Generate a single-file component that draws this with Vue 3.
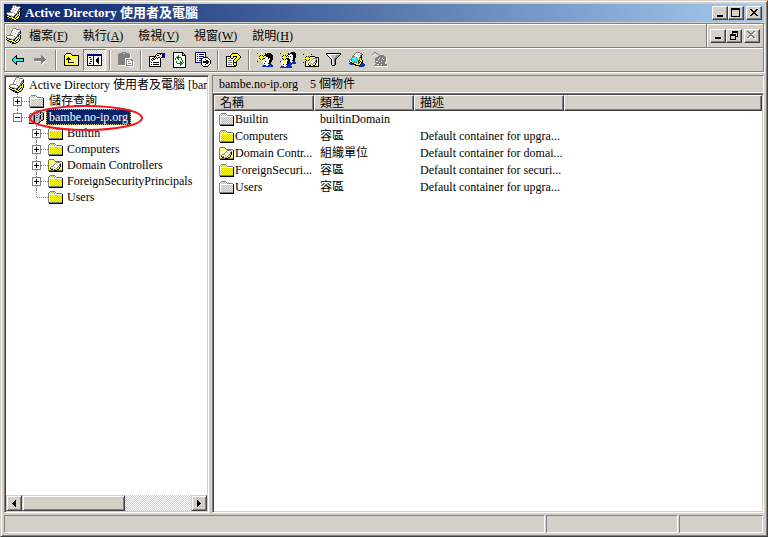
<script setup>
import { h, ref } from 'vue'

const palette = {
  K: '#000000', G: '#808080', g: '#c0c0c0', W: '#ffffff', Y: '#ffff00', y: '#ffff99',
  N: '#000080', B: '#0033cc', C: '#00ffff', R: '#008000', O: '#808000', F: '#ffe8c8'
}

const maps = {
  app: [
    '.......GGG......',
    '......GWWWGGGG..',
    '......GWgWWWWWG.',
    '.....GWWWWgWWGK.',
    '.....GWgWWWWGGK.',
    '....GWWWWgWWGgK.',
    '....GWWgWWWGGK..',
    '.GGGGGGWWWWGKYK.',
    'GWWWWWWgGWGGKYK.',
    'KgWWWWWWWGKYgYK.',
    '.KGGggWWGKgYKYK.',
    'KYYKKGGGKgYKYK..',
    '.KKYYYYKKYKYYK..',
    '..GKKKYYYKYYK...',
    '....KGKKYYKK....',
    '......KKKK......'
  ],
  folder: [
    '..GGGGG.........',
    '.GWdddWG........',
    'GWdddddWGGGGGG..',
    'GWWWWWWWWWWWWWK.',
    'GWddddddddddddK.',
    'GWddddddddddddK.',
    'GWddddddddddddK.',
    'GWddddddddddddK.',
    'GWddddddddddddK.',
    'GWddddddddddddK.',
    'GWddddddddddddK.',
    'GGGGGGGGGGGGGGK.',
    '.KKKKKKKKKKKKKK.'
  ],
  ou: [
    '.OOOOO..........',
    'OyyyyyO.........',
    'OyyyyyyOOOOOOO..',
    'OyyyyyyyGGGGyyK.',
    'OyyyyyyGWWWWGyK.',
    'OyyyyyGWgWWGKyK.',
    'OyyyyGWWWgWGKyK.',
    'OyyGGgWWWWGYKyK.',
    'OyGWWWGWWGYKyyK.',
    'OyKgGWWWGYYKyyK.',
    'OyyKKYGGYKKyyyK.',
    'OOOOOOKKKOOOOOK.',
    '.KKKKKKKKKKKKKK.'
  ],
  domain: [
    '......GGGGGG....',
    '.....GWWWWGK....',
    '....GWWWWGgKGGG.',
    '.GGGGGGGGggKWGK.',
    'GWWWgGgggGggGgK.',
    'GGGGGKgGGggKggK.',
    'GgggGKggggGKgGK.',
    'GgGgGKgKGgGKggK.',
    'GgggGKggggGKggK.',
    'GgggGKggggGGgGK.',
    'GgggGKggggGgKK..',
    'GgggGKggggGK....',
    'GgggGKgggGK.....',
    'KKKKKKKKKK......'
  ],
  back: [
    '....K.......',
    '...KK.......',
    '..KCK.......',
    '.KCCKKKKKKKK',
    'KCCCCCCCCCCK',
    'KCCCCCCCCCCK',
    '.KCCKKKKKKKK',
    '..KCK.......',
    '...KK.......',
    '....K.......'
  ],
  forward: [
    '.......G.....',
    '.......GG....',
    '.......GGG...',
    'GGGGGGGGGGG..',
    'GGGGGGGGGGGG.',
    'GGGGGGGGGGGWW',
    '.WWWWWWGGGWW.',
    '.......GGWW..',
    '.......GWW...',
    '........W....'
  ],
  up: [
    '..KKKKK........',
    '.KyyyyyK.......',
    'KyyyyyyyKKKKKKK',
    'KyYyYyYyYyYyYyK',
    'KYyYKYyYyYyYyYK',
    'KyYKKKyYyYyYyYK',
    'KYKKKKKyYyYyYyK',
    'KyYyKYyYyYyYyYK',
    'KYyYKyYyYyYyYyK',
    'KyYyKKKKKKyYyYK',
    'KYyYyYyYyYyYyYK',
    'KyYyYyYyYyYyYyK',
    'KKKKKKKKKKKKKKK'
  ],
  tree: [
    'NNNNNNNNNNNNNNN',
    'NNNNNNNNNNNNNNN',
    'NWWWWWNWWWWWWWN',
    'NWKKWWNWWWWKWWN',
    'NWWWWWNWWWKKWWN',
    'NWWKKWNWWKKKWWN',
    'NWWWWWNWWKKKWWN',
    'NWWKKWNWWKKKWWN',
    'NWWWWWNWWWKKWWN',
    'NWKKWWNWWWWKWWN',
    'NWWWWWNWWWWWWWN',
    'NNNNNNNNNNNNNNN'
  ],
  paste: [
    '....GGGG........',
    '.GGGGggGGGG.....',
    'GGGGGGGGGGGGW...',
    'GGGGGGGGGGGGW...',
    'GGGGGGGGGGGGW...',
    'GGGGGGGGGGGGW...',
    'GGGGGGGWWWWWW...',
    'GGGGGGGWGGGGGG..',
    'GGGGGGGWGWWWWGG.',
    'GGGGGGGWGWGGWWGW',
    'GGGGGGGWGWWWWWGW',
    'GGGGGGGWGWGGGWGW',
    'GGGGGGGWGWWWWWGW',
    '.WWWWWWWGGGGGGGW',
    '.........WWWWWWW'
  ],
  properties: [
    '........KKKKKNNN',
    '.......KFFFKFNNN',
    '......KFKKFFFNNN',
    'KKKKKKKFFFFFFNNN',
    'KWWWWKFKFKKFKNNN',
    'KWWKKWKWKWWK....',
    'KWKWKKWWWWWK....',
    'KWWKWWWWWWWK....',
    'KWWWWWWWWWWK....',
    'KWKWKKKKKKWK....',
    'KWWWWWWWWWWK....',
    'KWKWKKKKKKWK....',
    'KWWWWWWWWWWK....',
    'KKKKKKKKKKKK....'
  ],
  refresh: [
    'KKKKKKKKKK...',
    'KWWWWWWWWKK..',
    'KWWWWWWWWKWK.',
    'KWWWWRWWWKKKK',
    'KWWWRRWWWWWWK',
    'KWWRRRRRWWWWK',
    'KWRWRRWWRWWWK',
    'KWRWWRWWRWWWK',
    'KWWWWWWWWRWWK',
    'KWWRWWWRWRWWK',
    'KWWRWWWRRWRWK',
    'KWWWRRRRRRWWK',
    'KWWWWWWRRWWWK',
    'KWWWWWWRWWWWK',
    'KWWWWWWWWWWWK',
    'KKKKKKKKKKKKK'
  ],
  exportList: [
    'NNNNNNNNNNN.....',
    'NWWWWWWWWWN.....',
    'NWNWNNNNNWN.....',
    'NWWWWWWWWWN.....',
    'NWNWNNNNNWN.....',
    'NWWWWWWWKKKKK...',
    'NWNWNNNKWWWWWK..',
    'NWWWWWKWWWKWWWK.',
    'NWNWNNKWWWWKKWWK',
    'NWWWWWKWKKKKKKWK',
    'NNNNNNKWKKKKKKWK',
    '......KWWWWKKWWK',
    '......KWWWKWWWK.',
    '.......KWWWWWK..',
    '........KKKKK...'
  ],
  help: [
    '......KKKKKK...',
    '.....KYYYYYYK..',
    '....KYYYYYYYYK.',
    'KKKKKYYKKKKYYYK',
    'KWWWKYYKWWKYYYK',
    'KWGGWKKWWKYYYK.',
    'KWWWWWWWKYYYK..',
    'KWGGGGWKYYYK...',
    'KWWWWWWKYYK....',
    'KWGGGGWKKKK....',
    'KWWWWWWKYYK....',
    'KWGGGGWKYYK....',
    'KWWWWWWWKKK....',
    'KKKKKKKKKK.....'
  ],
  user: [
    '....Y...........',
    'K...Y...K.KKKK..',
    '.Y..Y..YKKKKKKK.',
    '..YKYKYKKKKKKKKK',
    '..KYYYKWWKKKKKKK',
    'YYYYYYYYYWWKKKKK',
    '..KYYYKKWWWKWKKK',
    '..YKYKYWWWWWWKKK',
    '.Y..YWWYWWWWKKK.',
    'K...Y.WWKWWWKKK.',
    '....Y.WWWWWWKK..',
    '......WKWWWKKB..',
    '.......WWWWWBBB.',
    '......BBBWWBBBBB',
    '.....BBBBBBBBBBB'
  ],
  group: [
    '....Y......KKKK.',
    'K...Y...K.KKKKKK',
    '.Y..Y..YKKWWKKKK',
    '..YKYKYKWWWWWKKK',
    '..KYYYKWKWKWWKKK',
    'YYYYYYYYYWWWWKKK',
    '..KYYYKKKWWWWKK.',
    '..YKYKYKKKWWWKK.',
    '.Y.WYWWYKKWWKKK.',
    'K.WWYWWKKKWWWBB.',
    '.WWWYWWKKBBWBBBB',
    '..WWWWWKKBBBBBBB',
    '..WKWWKKBBBB....',
    '...WWWWBBBB.....',
    '.BBBWWBBBBBB....',
    'BBBBBBBBBBBB....'
  ],
  newOu: [
    '....Y...........',
    'K...Y...K.......',
    '.Y..Y..Y........',
    '..YKYKYKKKKK....',
    '..KYYYKyyyyyKKKK',
    'YYYYYYYYYyGGGGyK',
    '..KYYYKyyGWWWGyK',
    '..YKYKYyGWgWGKyK',
    '.YKyYyyYWWWWGKyK',
    'K.KyYyGgWWgGYKyK',
    '..KyyGWWGWGYKyyK',
    '..KyyKYGWGYYKyyK',
    '..KyyyKKYYKKyyyK',
    '..KKKKKKKKKKKKKK'
  ],
  filter: [
    'KKKKKKKKKKKKKKK',
    'KWWWWWWWWWWWggK',
    '.KWWggggggGGGK.',
    '..KWWgggggGGK..',
    '...KWWgggGGK...',
    '....KWggGGK....',
    '.....KWgGK.....',
    '.....KWgGK.....',
    '.....KWgGK.....',
    '.....KWgGK.....',
    '.....KWgGK.....',
    '.....KWgGK.....',
    '......KKK......'
  ],
  find: [
    '.......GGGG.....',
    '......GWWWWGG...',
    '.....GWWgWWWGK..',
    '....GWWWWgWGK...',
    '...GGGWWWWWGK...',
    '...GCCCGWWGKK...',
    '..GCCWCCGWGYK...',
    '.GGCWCCCGWGYK...',
    'GWGCCCCCGGKYYK..',
    'KYYGCCCGWKgKYK..',
    '.BKYGGGGYGKYKK..',
    'BBBKKYYYYKYYKBB.',
    '.BBBBKKYYYYKBBBB',
    '......KKKKKBBBBB',
    '..........BBBBB.'
  ],
  disabled: [
    '..GG............',
    '.G..GG..........',
    'G.WW..G.........',
    '.W.....GGGGG....',
    '......GGGGGGG...',
    '....GGGGGGGGGG..',
    '...GGGGWGGWGGGW.',
    '...GGGWGGGGWGGW.',
    '...GGGGGGGGGGGW.',
    '...GWWGGGWGGGGW.',
    '...GGGGWGGGGGW..',
    '....GGGGGGGGGW..',
    '...GGWWGGWGGGGG.',
    '..GGGGGGGGGGGGGW',
    '...WWWWWWWWWWWWW'
  ],
  min: ['......', '......', '......', '......', '......', '......', 'KKKKKK', 'KKKKKK'],
  max: [
    'KKKKKKKKK', 'KKKKKKKKK', 'K.......K', 'K.......K', 'K.......K',
    'K.......K', 'K.......K', 'K.......K', 'KKKKKKKKK'
  ],
  close: ['KK....KK', '.KK..KK.', '..KKKK..', '...KK...', '..KKKK..', '.KK..KK.', 'KK....KK'],
  closeOff: ['GG....GG.', '.GG..GGWW', '..GGGGWW.', '...GGWW..', '..GGGG...', '.GGWWGG..', 'GGWW..GG.', '.WW....WW'],
  restore: ['..KKKKKK', '..KKKKKK', '..K....K', 'KKKKKK.K', 'KKKKKK.K', 'K....KKK', 'K....K..', 'K....K..', 'KKKKKK..'],
  left: ['...K', '..KK', '.KKK', 'KKKK', '.KKK', '..KK', '...K'],
  right: ['K...', 'KK..', 'KKK.', 'KKKK', 'KKK.', 'KK..', 'K...']
}

// Each icon is a small bitmap; "d" is a yellow and grey checker fill.
const PixelIcon = (props) => {
  const rows = maps[props.name]
  const width = Math.max(...rows.map((r) => r.length))
  const paths = {}
  rows.forEach((row, y) => {
    [...row].forEach((c, x) => {
      if (c === '.') return
      const key = c === 'd' ? ((x + y) % 2 ? 'Y' : 'g') : c
      paths[key] = (paths[key] || '') + `M${x} ${y}h1v1h-1z`
    })
  })
  return h(
    'svg',
    { width, height: rows.length, viewBox: `0 0 ${width} ${rows.length}`, 'shape-rendering': 'crispEdges', 'aria-hidden': 'true' },
    Object.entries(paths).map(([k, d]) => h('path', { d, fill: palette[k] }))
  )
}
PixelIcon.props = ['name']

const menus = [['檔案', 'F'], ['執行', 'A'], ['檢視', 'V'], ['視窗', 'W'], ['說明', 'H']]
const tools = [
  ['back', 'forward'], ['up', 'tree'], ['paste'], ['properties', 'refresh', 'exportList'],
  ['help'], ['user', 'group', 'newOu', 'filter', 'find', 'disabled']
]
const off = ['forward', 'paste', 'disabled']
const nodes = [
  { text: '儲存查詢', icon: 'folder', level: 1, sign: 'plus' },
  { text: 'bambe.no-ip.org', icon: 'domain', level: 1, sign: 'minus', last: true },
  { text: 'Builtin', icon: 'folder', level: 2, sign: 'plus' },
  { text: 'Computers', icon: 'folder', level: 2, sign: 'plus' },
  { text: 'Domain Controllers', icon: 'ou', level: 2, sign: 'plus' },
  { text: 'ForeignSecurityPrincipals', icon: 'folder', level: 2, sign: 'plus' },
  { text: 'Users', icon: 'folder', level: 2, last: true }
]
const selected = ref('bambe.no-ip.org')
const items = [
  ['folder', 'Builtin', 'builtinDomain', ''],
  ['folder', 'Computers', '容區', 'Default container for upgra...'],
  ['ou', 'Domain Contr...', '組織單位', 'Default container for domai...'],
  ['folder', 'ForeignSecuri...', '容區', 'Default container for securi...'],
  ['folder', 'Users', '容區', 'Default container for upgra...']
]
</script>

<template>
  <div class="window">
    <header class="title">
      <PixelIcon name="app" />
      <h1>Active Directory 使用者及電腦</h1>
      <div class="controls">
        <button class="box"><PixelIcon name="min" /></button>
        <button class="box"><PixelIcon name="max" /></button>
        <button class="box apart"><PixelIcon name="close" /></button>
      </div>
    </header>

    <div class="bars">
      <div class="menurow">
        <nav class="menu">
          <PixelIcon name="app" />
          <button v-for="m in menus" :key="m[1]">{{ m[0] }}(<u>{{ m[1] }}</u>)</button>
        </nav>
        <div class="controls child">
          <button class="box"><PixelIcon name="min" /></button>
          <button class="box"><PixelIcon name="restore" /></button>
          <button class="box apart" disabled><PixelIcon name="closeOff" /></button>
        </div>
      </div>
      <div class="toolbar">
        <div v-for="(g, i) in tools" :key="i" class="group">
          <button v-for="t in g" :key="t" :class="{ pressed: t === 'tree' }" :disabled="off.includes(t)">
            <PixelIcon :name="t" />
          </button>
        </div>
      </div>
    </div>

    <main class="panes">
      <section class="pane left">
        <div class="tree">
          <div class="node root"><PixelIcon name="app" /><span class="label">Active Directory 使用者及電腦 [bam</span></div>
          <div v-for="n in nodes" :key="n.text" class="node" :class="['level' + n.level, { last: n.last }]">
            <span class="gutter"><button v-if="n.sign" class="sign" :class="n.sign"></button></span>
            <PixelIcon :name="n.icon" />
            <button class="label" :class="{ selected: selected === n.text }" @click="selected = n.text">{{ n.text }}</button>
            <svg v-if="n.icon === 'domain'" class="mark" width="116" height="28" viewBox="0 0 116 28">
              <ellipse cx="58" cy="14" rx="56" ry="12" fill="none" stroke="#f01420" stroke-width="2" />
            </svg>
          </div>
        </div>
        <div class="scroll">
          <button class="box arrow"><PixelIcon name="left" /></button>
          <div class="track"><div class="box thumb"></div></div>
          <button class="box arrow"><PixelIcon name="right" /></button>
        </div>
      </section>

      <section class="right">
        <div class="caption"><span>bambe.no-ip.org</span><span>5 個物件</span></div>
        <div class="pane list">
          <table>
            <colgroup><col class="c1"><col class="c1"><col class="c3"><col></colgroup>
            <thead>
              <tr><th>名稱</th><th>類型</th><th>描述</th><th></th></tr>
            </thead>
            <tbody>
              <tr v-for="r in items" :key="r[1]">
                <td><span class="name"><PixelIcon :name="r[0]" />{{ r[1] }}</span></td>
                <td>{{ r[2] }}</td>
                <td>{{ r[3] }}</td>
                <td></td>
              </tr>
            </tbody>
          </table>
        </div>
      </section>
    </main>

    <footer class="status"><div></div><div></div><div></div></footer>
  </div>
</template>

<style>
body {
  background: #d4d0c8;
}
</style>

<style scoped>
.window {
  box-sizing: border-box;
  height: 100vh;
  display: flex;
  flex-direction: column;
  background: #d4d0c8;
  border: 1px solid;
  border-color: #d4d0c8 #404040 #404040 #d4d0c8;
  box-shadow: inset 1px 1px #fff, inset -1px -1px #808080;
  padding: 3px;
  font: 12px/16px "Liberation Serif", "Noto Sans CJK TC", serif;
  color: #000;
}
svg {
  display: block;
  flex: none;
}
button {
  font: inherit;
  color: inherit;
  padding: 0;
  border: 0;
  background: none;
  white-space: nowrap;
}
.title {
  display: flex;
  align-items: center;
  height: 18px;
  padding: 0 2px;
  background: linear-gradient(90deg, #0a246a, #a6caf0);
  color: #fff;
}
.title h1 {
  flex: 1;
  margin: 0 0 0 3px;
  font-size: 13px;
  line-height: 18px;
  white-space: nowrap;
}
.controls {
  display: flex;
}
.box {
  box-sizing: border-box;
  display: flex;
  align-items: center;
  justify-content: center;
  width: 16px;
  height: 14px;
  background: #d4d0c8;
  border: 1px solid;
  border-color: #fff #404040 #404040 #fff;
  box-shadow: inset -1px -1px #808080;
}
.controls .box {
  padding: 0 1px 1px 0;
}
.controls .apart {
  margin-left: 2px;
}
.bars {
  margin-top: 1px;
  border: 1px solid #808080;
  box-shadow: inset 1px 1px #fff, 1px 1px #fff;
}
.menurow {
  display: flex;
  height: 23px;
  border-bottom: 1px solid #808080;
}
.menu {
  flex: 1;
  display: flex;
  align-items: center;
  padding-left: 1px;
  border-right: 1px solid #808080;
}
.menu button {
  padding: 0 8px 0 7px;
}
.child {
  align-items: center;
  padding: 0 3px;
  box-shadow: inset 1px 0 #fff;
}
.toolbar {
  display: flex;
  height: 23px;
  padding-left: 1px;
  box-shadow: inset 0 1px #fff;
}
.group {
  display: flex;
  align-items: center;
}
.group + .group::before {
  content: "";
  box-sizing: border-box;
  width: 2px;
  height: 20px;
  margin: 0 3px;
  border-left: 1px solid #808080;
  border-right: 1px solid #fff;
}
.group button {
  box-sizing: border-box;
  display: flex;
  align-items: center;
  justify-content: center;
  width: 23px;
  height: 22px;
}
.group .pressed {
  border: 1px solid;
  border-color: #808080 #fff #fff #808080;
  background: repeating-conic-gradient(#fff 0 25%, #d4d0c8 0 50%) 0 0 / 2px 2px;
}
.panes {
  flex: 1;
  min-height: 0;
  display: grid;
  grid-template-columns: 205px minmax(0, 1fr);
  gap: 3px;
  padding: 3px 0 2px;
}
.pane {
  display: flex;
  flex-direction: column;
  min-width: 0;
  background: #fff;
  border: 1px solid;
  border-color: #808080 #fff #fff #808080;
  box-shadow: inset 1px 1px #404040, inset -1px -1px #d4d0c8;
  padding: 1px;
}
.tree {
  flex: 1;
  overflow: hidden;
}
.node {
  position: relative;
  display: flex;
  align-items: center;
  height: 16px;
  padding-left: 4px;
  white-space: nowrap;
}
.root {
  padding-left: 3px;
}
.level2 {
  padding-left: 23px;
}
.label {
  margin-left: 1px;
  padding: 0 3px;
  line-height: 16px;
}
.level2 .label {
  margin-left: 0;
}
.selected {
  background: #0a246a;
  color: #fff;
  outline: 1px dotted #d4c080;
  outline-offset: -1px;
}
.gutter {
  position: relative;
  width: 19px;
  height: 16px;
}
.gutter::before {
  content: "";
  position: absolute;
  inset: 0 auto 0 7px;
  border-left: 1px dotted #808080;
}
.last .gutter::before {
  bottom: 8px;
}
.gutter::after {
  content: "";
  position: absolute;
  inset: 8px 0 auto 8px;
  border-top: 1px dotted #808080;
}
.sign {
  position: absolute;
  z-index: 1;
  left: 3px;
  top: 4px;
  width: 9px;
  height: 9px;
  border: 1px solid #808080;
  background: linear-gradient(#000, #000) center / 5px 1px no-repeat #fff;
}
.plus {
  background: linear-gradient(#000, #000) center / 5px 1px no-repeat, linear-gradient(#000, #000) center / 1px 5px no-repeat #fff;
}
.mark {
  position: absolute;
  z-index: 2;
  left: 22px;
  top: -5px;
  pointer-events: none;
}
.scroll {
  display: flex;
}
.scroll .box {
  height: 16px;
  border-color: #d4d0c8 #404040 #404040 #d4d0c8;
  box-shadow: inset 1px 1px #fff, inset -1px -1px #808080;
}
.track {
  flex: 1;
  background: repeating-conic-gradient(#fff 0 25%, #d4d0c8 0 50%) 0 0 / 2px 2px;
}
.track .thumb {
  width: 61%;
}
.right {
  display: flex;
  flex-direction: column;
  min-width: 0;
}
.caption {
  display: flex;
  gap: 12px;
  padding: 0 6px;
  border: 1px solid;
  border-color: #808080 #fff #fff #808080;
}
.list {
  flex: 1;
}
table {
  width: 100%;
  table-layout: fixed;
  border-collapse: separate;
  border-spacing: 0;
}
.c1 {
  width: 100px;
}
.c3 {
  width: 150px;
}
th {
  height: 16px;
  box-sizing: border-box;
  padding: 0 5px;
  font-weight: normal;
  line-height: 14px;
  text-align: left;
  background: #d4d0c8;
  border: 1px solid;
  border-color: #fff #404040 #404040 #fff;
  box-shadow: inset -1px -1px #808080;
}
td {
  height: 17px;
  padding: 0 6px;
  line-height: 17px;
  white-space: nowrap;
  overflow: hidden;
}
td:first-child {
  padding: 0 0 0 5px;
}
.name {
  display: flex;
  align-items: center;
}
.status {
  display: grid;
  grid-template-columns: minmax(0, 1fr) 132px 84px;
  gap: 1px;
  padding-right: 1px;
}
.status div {
  height: 16px;
  border: 1px solid;
  border-color: #808080 #fff #fff #808080;
}
</style>
